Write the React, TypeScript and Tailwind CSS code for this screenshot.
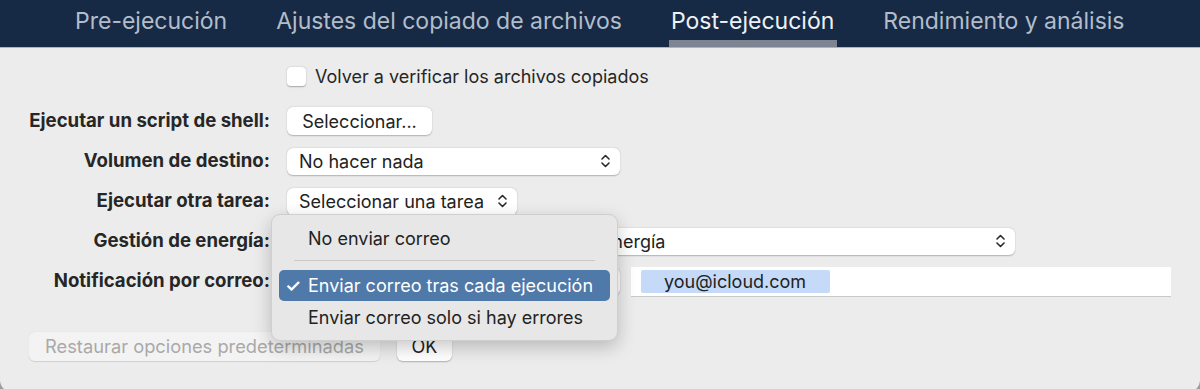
import React from "react";

const font = { fontFamily: 'Inter, "Liberation Sans", Arial, sans-serif' };

const Chevrons = ({ className = "" }: { className?: string }) => (
  <svg width="9" height="14" viewBox="0 0 9 14" className={className}>
    <path d="M1 5 L4.5 1.5 L8 5" fill="none" stroke="#2a2a2a" strokeWidth="1.6" strokeLinecap="round" strokeLinejoin="round" />
    <path d="M1 9 L4.5 12.5 L8 9" fill="none" stroke="#2a2a2a" strokeWidth="1.6" strokeLinecap="round" strokeLinejoin="round" />
  </svg>
);

const tabs = [
  { label: "Pre-ejecución", active: false },
  { label: "Ajustes del copiado de archivos", active: false },
  { label: "Post-ejecución", active: true },
  { label: "Rendimiento y análisis", active: false },
];

const Label = ({ children }: { children: React.ReactNode }) => (
  <div className="flex h-[40px] items-center justify-end text-[18.6px] font-bold text-[#262626]">{children}</div>
);

const Select = ({ text, width }: { text: string; width: string }) => (
  <div
    className={`flex h-[27px] items-center justify-between rounded-[6px] bg-white pl-[12px] pr-[10px] text-[18px] text-[#222] shadow-[0_0.5px_1.5px_rgba(0,0,0,0.25)] ${width}`}
  >
    <span className="truncate">{text}</span>
    <Chevrons className="shrink-0" />
  </div>
);

export default function App() {
  return (
    <div className="h-[389px] w-[1200px] overflow-hidden bg-[#9c9c9c]">
      <div style={font} className="h-[392px] w-[1200px] overflow-hidden rounded-b-[12px] bg-[#ececec]">
        {/* Pestañas */}
        <div className="flex h-[48px] items-stretch border-b border-[#a9b5c5] bg-[#172a45] pl-[75px]">
          {tabs.map((t) => (
            <div
              key={t.label}
              className={`relative mr-[49px] flex items-start pt-[4px] text-[23px] ${
                t.active ? "text-[#eef1f5]" : "text-[#b3bdca]"
              }`}
            >
              {t.label}
              {t.active && <div className="absolute bottom-0 -left-[2px] -right-[3px] h-[7px] bg-[#7c8591]" />}
            </div>
          ))}
        </div>

        {/* Contenido */}
        <div className="relative">
          <div className="grid grid-cols-[270px_1fr] gap-x-[17px] pt-[8px]">
            <div />
            <div className="flex h-[40px] items-center gap-[9px] text-[18px] text-[#262626]">
              <div className="h-[19px] w-[19px] rounded-[4px] bg-white shadow-[0_0.5px_1.5px_rgba(0,0,0,0.3)]" />
              <span>Volver a verificar los archivos copiados</span>
            </div>

            <div className="col-span-2 h-[5px]" />

            <Label>Ejecutar un script de shell:</Label>
            <div className="flex h-[40px] items-center">
              <div className="flex h-[28px] w-[145px] items-center justify-center rounded-[6px] bg-white text-[18px] text-[#222] shadow-[0_0.5px_1.5px_rgba(0,0,0,0.25)]">
                Seleccionar...
              </div>
            </div>

            <Label>Volumen de destino:</Label>
            <div className="flex h-[40px] items-center">
              <Select text="No hacer nada" width="w-[333px]" />
            </div>

            <Label>Ejecutar otra tarea:</Label>
            <div className="flex h-[40px] items-center">
              <Select text="Seleccionar una tarea" width="w-[230px]" />
            </div>

            <Label>Gestión de energía:</Label>
            <div className="flex h-[40px] items-center">
              <Select text="No modificar la configuración de la energía" width="w-[728px]" />
            </div>

            <Label>Notificación por correo:</Label>
            <div className="flex h-[40px] items-center gap-[11px]">
              <Select text="Enviar correo tras cada ejecución" width="w-[333px]" />
              <div className="flex h-[29px] w-[540px] items-center bg-white pl-[10px] text-[18px] text-[#222] shadow-[0_1px_0_rgba(0,0,0,0.15)]">
                <span className="rounded-[2px] bg-[#c5d9f8] pl-[23px] pr-[24px] leading-[23px]">you@icloud.com</span>
              </div>
            </div>
          </div>

          {/* Botones */}
          <div className="mt-[31px] flex items-center gap-[17px] pl-[29px]">
            <div className="flex h-[29px] w-[351px] items-center justify-center rounded-[6px] bg-[#f3f3f3] text-[18.3px] text-[#a9a9a9] shadow-[0_0.5px_1px_rgba(0,0,0,0.12)]">
              Restaurar opciones predeterminadas
            </div>
            <div className="flex h-[29px] w-[55px] items-center justify-center rounded-[6px] bg-white text-[18px] text-[#222] shadow-[0_0.5px_1.5px_rgba(0,0,0,0.25)]">
              OK
            </div>
          </div>

          {/* Menú desplegable */}
          <div className="absolute left-[271px] top-[166px] w-[347px] rounded-[9px] border border-[#cfcfcf] bg-[#e7e7e7] px-[7px] pb-[7px] pt-[10px] text-[18px] text-[#222] shadow-[0_6px_18px_rgba(0,0,0,0.22)]">
            <div className="flex h-[26px] items-center pl-[29px]">No enviar correo</div>
            <div className="mx-[15px] my-[9px] h-px bg-[#c9c9c9]" />
            <div className="flex h-[31px] items-center rounded-[5px] bg-[#4f79a8] pl-[6px] text-white">
              <span className="w-[23px] font-semibold">✓</span>
              <span>Enviar correo tras cada ejecución</span>
            </div>
            <div className="flex h-[32px] items-center pl-[29px]">Enviar correo solo si hay errores</div>
          </div>
        </div>
      </div>
    </div>
  );
}
